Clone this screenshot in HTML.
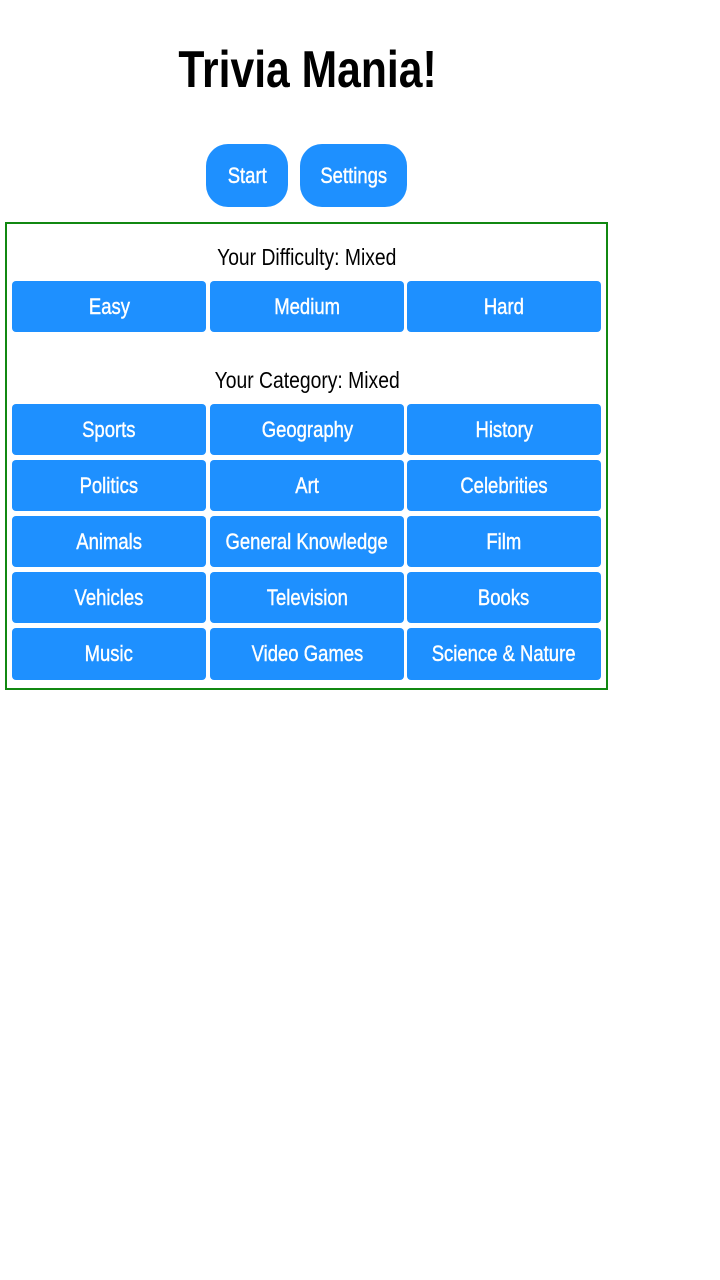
<!DOCTYPE html>
<html><head><style>
body{margin:0;width:720px;height:1280px;background:#fff;font-family:"Liberation Sans",sans-serif;position:relative}
.t{position:absolute;left:0;width:614px;text-align:center}
.n{display:inline-block;transform:scaleX(.84);white-space:nowrap}
.btn{position:absolute;background:#1e90ff;color:#fff;display:flex;align-items:center;justify-content:center;font-size:22px;-webkit-text-stroke:0.4px #fff}
.box{position:absolute;left:5px;top:222px;width:599px;height:464px;border:2px solid #118811}
.g{position:absolute;height:51px;width:194px;border-radius:4px}
</style></head><body>
<div class="t" style="top:38px;font-size:52px;font-weight:bold;line-height:64px"><span class="n" style="transform:scaleX(.82)">Trivia Mania!</span></div>
<div class="btn" style="left:206px;top:144px;width:82px;height:63px;border-radius:22px"><span class="n">Start</span></div>
<div class="btn" style="left:300px;top:144px;width:107px;height:63px;border-radius:22px"><span class="n">Settings</span></div>
<div class="box"></div>
<div class="t" style="top:243px;font-size:23px;line-height:28px"><span class="n">Your Difficulty: Mixed</span></div>
<div class="btn g" style="left:12px;top:281px"><span class="n">Easy</span></div>
<div class="btn g" style="left:210px;top:281px"><span class="n">Medium</span></div>
<div class="btn g" style="left:407px;top:281px"><span class="n">Hard</span></div>
<div class="t" style="top:366px;font-size:23px;line-height:28px"><span class="n">Your Category: Mixed</span></div>
<div class="btn g" style="left:12px;top:404px"><span class="n">Sports</span></div>
<div class="btn g" style="left:210px;top:404px"><span class="n">Geography</span></div>
<div class="btn g" style="left:407px;top:404px"><span class="n">History</span></div>
<div class="btn g" style="left:12px;top:460px"><span class="n">Politics</span></div>
<div class="btn g" style="left:210px;top:460px"><span class="n">Art</span></div>
<div class="btn g" style="left:407px;top:460px"><span class="n">Celebrities</span></div>
<div class="btn g" style="left:12px;top:516px"><span class="n">Animals</span></div>
<div class="btn g" style="left:210px;top:516px"><span class="n">General Knowledge</span></div>
<div class="btn g" style="left:407px;top:516px"><span class="n">Film</span></div>
<div class="btn g" style="left:12px;top:572px"><span class="n">Vehicles</span></div>
<div class="btn g" style="left:210px;top:572px"><span class="n">Television</span></div>
<div class="btn g" style="left:407px;top:572px"><span class="n">Books</span></div>
<div class="btn g" style="left:12px;top:628px;height:52px"><span class="n">Music</span></div>
<div class="btn g" style="left:210px;top:628px;height:52px"><span class="n">Video Games</span></div>
<div class="btn g" style="left:407px;top:628px;height:52px"><span class="n">Science &amp; Nature</span></div>
</body></html>
